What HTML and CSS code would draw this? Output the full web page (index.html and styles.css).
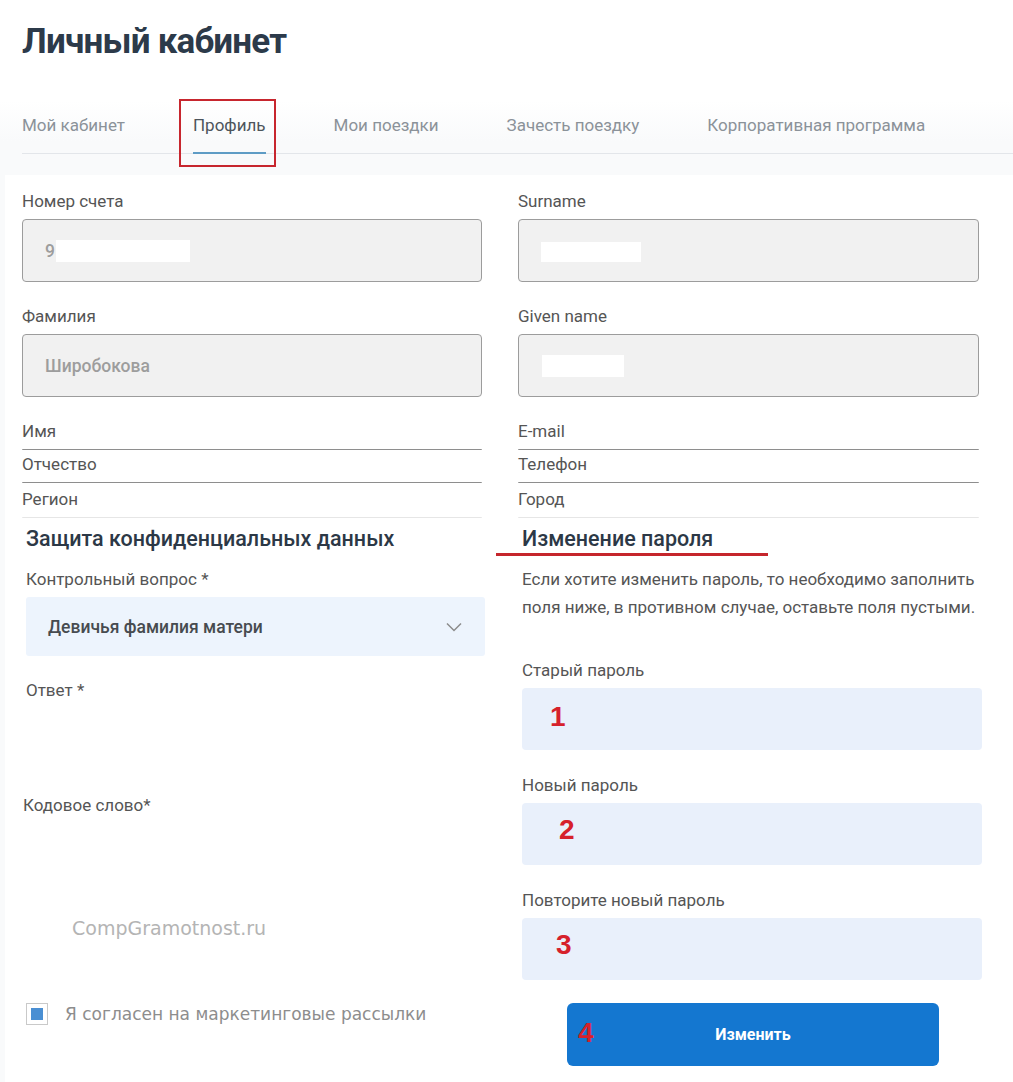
FILE: index.html
```html
<!DOCTYPE html>
<html lang="ru">
<head>
    <meta charset="UTF-8">
    <meta name="viewport" content="width=device-width, initial-scale=1.0">
    <title>Личный кабинет</title>
    <link rel="stylesheet" href="styles.css">
</head>
<body>
    <div class="page">
        <h1 class="title">Личный кабинет</h1>

        <div class="band">
            <nav class="tabs">
                <a class="tab">Мой кабинет</a>
                <a class="tab active">Профиль<span class="mark"></span></a>
                <a class="tab">Мои поездки</a>
                <a class="tab">Зачесть поездку</a>
                <a class="tab">Корпоративная программа</a>
            </nav>
        </div>

        <div class="card">
            <div class="fields">
                <div class="col">
                    <div class="field">
                        <label>Номер счета</label>
                        <div class="box">9<span class="hide hide-acc"></span></div>
                    </div>
                    <div class="field">
                        <label>Фамилия</label>
                        <div class="box">Широбокова</div>
                    </div>
                    <div class="thin first">
                        <label>Имя</label>
                        <div class="rule"></div>
                    </div>
                    <div class="thin">
                        <label>Отчество</label>
                        <div class="rule"></div>
                    </div>
                    <div class="thin last">
                        <label>Регион</label>
                        <div class="rule"></div>
                    </div>
                </div>
                <div class="col">
                    <div class="field">
                        <label>Surname</label>
                        <div class="box"><span class="hide hide-sur"></span></div>
                    </div>
                    <div class="field">
                        <label>Given name</label>
                        <div class="box"><span class="hide hide-given"></span></div>
                    </div>
                    <div class="thin first">
                        <label>E-mail</label>
                        <div class="rule"></div>
                    </div>
                    <div class="thin">
                        <label>Телефон</label>
                        <div class="rule"></div>
                    </div>
                    <div class="thin last">
                        <label>Город</label>
                        <div class="rule"></div>
                    </div>
                </div>
            </div>

            <div class="lower">
                <div class="col">
                    <h3 class="section">Защита конфиденциальных данных</h3>
                    <div class="field">
                        <label>Контрольный вопрос *</label>
                        <div class="select">
                            <span>Девичья фамилия матери</span>
                            <svg width="16" height="10" viewBox="0 0 16 10">
                                <polyline points="1,1.5 8,8.5 15,1.5" fill="none" stroke="#8c8c8c" stroke-width="1.5"/>
                            </svg>
                        </div>
                    </div>
                    <div class="field">
                        <label>Ответ *</label>
                        <div class="box blank"></div>
                    </div>
                    <div class="field code">
                        <label>Кодовое слово*</label>
                        <div class="box blank"></div>
                    </div>
                    <div class="watermark">CompGramotnost.ru</div>
                    <div class="agree">
                        <span class="check"><span></span></span>
                        <span>Я согласен на маркетинговые рассылки</span>
                    </div>
                </div>
                <div class="col">
                    <h3 class="section underlined">Изменение пароля</h3>
                    <p class="hint">Если хотите изменить пароль, то необходимо заполнить поля ниже, в противном случае, оставьте поля пустыми.</p>
                    <div class="field pass">
                        <label>Старый пароль</label>
                        <div class="box pwd n1"><span class="num">1</span></div>
                    </div>
                    <div class="field pass">
                        <label>Новый пароль</label>
                        <div class="box pwd n2"><span class="num">2</span></div>
                    </div>
                    <div class="field pass">
                        <label>Повторите новый пароль</label>
                        <div class="box pwd n3"><span class="num">3</span></div>
                    </div>
                    <button class="submit" type="button"><span class="num">4</span>Изменить</button>
                </div>
            </div>
        </div>
    </div>
</body>
</html>
```

FILE: styles.css
```css
body {
    margin: 0;
    background-color: #fff;
    font-family: Roboto, "Liberation Sans", Arial, sans-serif;
    color: #555;
}
.page {
    width: 1013px;
    min-height: 1082px;
    background-color: #f9fafb;
}
.title {
    margin: 0;
    padding: 22px 0 0 22px;
    height: 101px;
    box-sizing: border-box;
    background-color: #fff;
    font-size: 35px;
    line-height: 40px;
    font-weight: 700;
    letter-spacing: -0.8px;
    color: #2c3a4a;
}
.band {
    padding: 0 0 21px 22px;
    background: linear-gradient(#fff, #f9fafb 40px);
}
.tabs {
    display: flex;
    gap: 68px;
    border-bottom: 1px solid #e3e6ea;
}
.tab {
    position: relative;
    padding: 14px 0 18px;
    font-size: 17px;
    line-height: 20px;
    color: #8b9299;
}
.tab.active {
    color: #4d545b;
    border-bottom: 2px solid #5e9cc5;
    margin-bottom: -1px;
    padding-bottom: 17px;
}
.mark {
    position: absolute;
    left: -14px;
    right: -10px;
    top: -2px;
    bottom: -15px;
    border: 2px solid #c7262e;
}
.card {
    margin-left: 5px;
    padding-bottom: 17px;
    background-color: #fff;
}
.fields {
    display: grid;
    grid-template-columns: 460px 461px;
    column-gap: 36px;
    padding: 16px 0 0 17px;
}
label {
    display: block;
    font-size: 17px;
    line-height: 20px;
    color: #555;
}
.field {
    margin-bottom: 24px;
}
.field label {
    margin-bottom: 8px;
}
.box {
    height: 63px;
    box-sizing: border-box;
    display: flex;
    align-items: center;
    padding-left: 22px;
    border: 1px solid #9c9c9c;
    border-radius: 4px;
    background-color: #f1f1f1;
    font-size: 17.5px;
    font-weight: 500;
    color: #9d9d9d;
}
.hide {
    display: inline-block;
    background-color: #fff;
}
.hide-acc {
    width: 134px;
    height: 22px;
    margin-left: 1px;
}
.hide-sur {
    width: 100px;
    height: 20px;
    margin-top: 2px;
}
.hide-given {
    width: 82px;
    height: 22px;
    margin-left: 1px;
}
.thin {
    padding-top: 4px;
}
.thin.first {
    padding-top: 0;
}
.thin.last {
    padding-top: 6px;
}
.thin label {
    margin-bottom: 8px;
}
.rule {
    height: 0;
    border-top: 1px solid #8e8e8e;
    border-radius: 6px 6px 0 0;
}
.thin.last .rule {
    border-top-color: #e6e6e6;
}
.lower {
    display: grid;
    grid-template-columns: 459px 460px;
    column-gap: 37px;
    padding: 9px 0 0 21px;
}
.section {
    position: relative;
    margin: 0 0 18px;
    font-size: 21.5px;
    line-height: 24px;
    font-weight: 500;
    color: #2c3846;
}
.underlined {
    margin-bottom: 14px;
}
.underlined::after {
    content: "";
    position: absolute;
    left: -26px;
    width: 272px;
    bottom: -5px;
    height: 3px;
    background-color: #c5262c;
}
.select {
    height: 59px;
    box-sizing: border-box;
    display: flex;
    align-items: center;
    justify-content: space-between;
    padding: 0 23px 0 22px;
    border-radius: 3px;
    background-color: #edf4fd;
    font-size: 17.5px;
    font-weight: 500;
    color: #474b50;
}
.box.blank {
    border: none;
    background: none;
}
.code label {
    margin-left: -3px;
}
.watermark {
    margin: 30px 0 0 46px;
    font-family: "DejaVu Sans", Verdana, sans-serif;
    font-size: 19px;
    line-height: 24px;
    color: #b4b4b4;
}
.agree {
    display: flex;
    align-items: center;
    gap: 17px;
    margin-top: 63px;
    font-family: "DejaVu Sans", Verdana, sans-serif;
    font-size: 17px;
    line-height: 22px;
    color: #8d8d8d;
}
.check {
    width: 22px;
    height: 22px;
    box-sizing: border-box;
    display: flex;
    align-items: center;
    justify-content: center;
    border: 1px solid #c9c9c9;
    background-color: #fff;
}
.check span {
    width: 12px;
    height: 12px;
    background-color: #4a8fd3;
}
.hint {
    margin: 0 0 39px;
    font-size: 17px;
    line-height: 28px;
    color: #555;
}
.pass {
    margin-bottom: 25px;
}
.pass:last-of-type {
    margin-bottom: 23px;
}
.box.pwd {
    height: 62px;
    border: none;
    border-radius: 4px;
    background-color: #e9f0fb;
    padding-left: 28px;
}
.num {
    font-family: "Liberation Sans", Arial, sans-serif;
    font-size: 28px;
    font-weight: 700;
    color: #d6212b;
}
.box.n1 .num {
    margin-top: -5px;
}
.box.n2 {
    padding-left: 37px;
}
.box.n2 .num {
    margin-top: -9px;
}
.box.n3 {
    padding-left: 34px;
}
.box.n3 .num {
    margin-top: -9px;
}
.submit {
    position: relative;
    display: block;
    width: 372px;
    height: 63px;
    margin: 0 0 0 45px;
    border: none;
    border-radius: 6px;
    background-color: #1477d0;
    color: #fff;
    font-family: Roboto, "Liberation Sans", Arial, sans-serif;
    font-size: 16px;
    font-weight: 700;
    cursor: pointer;
}
.submit .num {
    position: absolute;
    left: 11px;
    top: 14px;
    line-height: 32px;
}
```
